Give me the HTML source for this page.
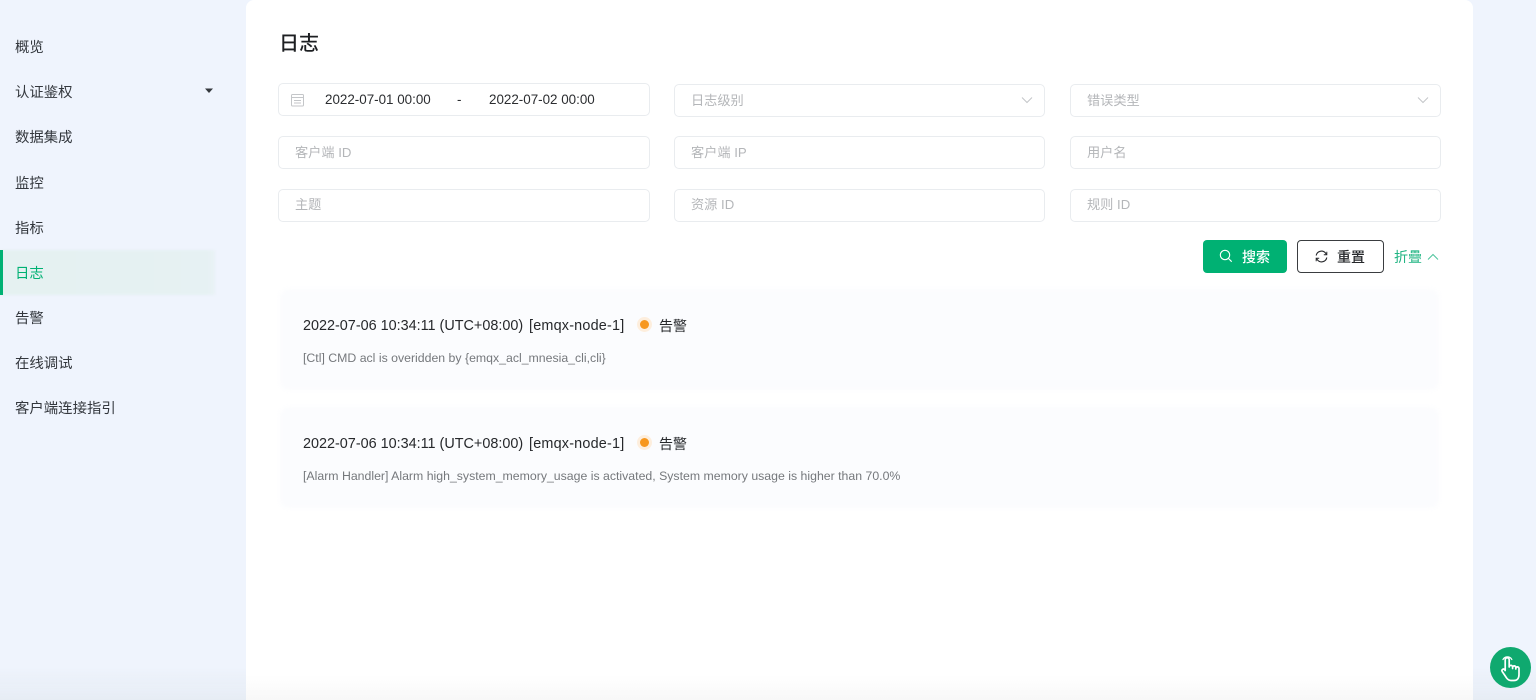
<!DOCTYPE html>
<html lang="zh">
<head>
<meta charset="utf-8">
<title>日志</title>
<style>
*{box-sizing:border-box;margin:0;padding:0}
html,body{width:1536px;height:700px;overflow:hidden}
body{background:#eff4fd;font-family:"Liberation Sans","Noto Sans CJK SC",sans-serif;color:#2e2e2e;position:relative}
#w{position:absolute;left:0;top:0;width:1536px;height:700px;filter:blur(.35px)}
.abs{position:absolute;white-space:nowrap}
.bottom{position:absolute;left:0;top:668px;width:1536px;height:32px;background:linear-gradient(#eff4fd00,#e6ecf4)}
.main{position:absolute;left:246px;top:0;width:1227px;height:700px;background:#fff;border-radius:8px 8px 0 0}
.mainfade{position:absolute;left:246px;top:675px;width:1227px;height:25px;background:linear-gradient(#fff0,#f8f8f8)}
.nav{position:absolute;left:15px;font-size:14.4px;line-height:20px;color:#33373d;white-space:nowrap}
.active-bg{position:absolute;left:0;top:250px;width:215px;height:45px;background:linear-gradient(90deg,#e5f1f1,#e6f1f3 96%,#e9f2f6);filter:blur(1px)}
.active-bar{position:absolute;left:0;top:250px;width:3px;height:45px;background:#00b173}
.field{position:absolute;width:371px;height:33px;background:#fff;border:1px solid #e9ecef;border-radius:5px;font-size:13.2px;line-height:31px;padding-left:16px;color:#b4b6b9;white-space:nowrap}
.card{position:absolute;left:280px;width:1159px;height:101px;background:#fbfcfe;border-radius:8px;filter:blur(2px)}
.line{position:absolute;left:303px;font-size:14.4px;line-height:20px;color:#26282b;white-space:nowrap}
.msg{position:absolute;left:303px;font-size:12.3px;line-height:18px;color:#75787c;white-space:nowrap}
.dot{position:absolute;left:640px;width:9px;height:9px;border-radius:50%;background:#f7971e;box-shadow:0 0 0 3px #fdeedd}
</style>
</head>
<body>
<div id="w">
<div class="bottom"></div>
<div class="active-bg"></div>
<div class="active-bar"></div>
<div class="nav" style="top:38px">概览</div>
<div class="nav" style="top:83px">认证鉴权</div>
<svg class="abs" style="left:205px;top:88px" width="8" height="6"><path d="M0 .5H8L4 5Z" fill="#34383d"/></svg>
<div class="nav" style="top:128px">数据集成</div>
<div class="nav" style="top:174px">监控</div>
<div class="nav" style="top:219px">指标</div>
<div class="nav" style="top:264px;color:#00b173">日志</div>
<div class="nav" style="top:309px">告警</div>
<div class="nav" style="top:354px">在线调试</div>
<div class="nav" style="top:399px">客户端连接指引</div>

<div class="main"></div>
<div class="mainfade"></div>
<div class="abs" style="left:279px;top:30px;font-size:20px;line-height:28px;font-weight:500;color:#1d1f22">日志</div>

<div class="field" style="left:278px;top:83px;width:372px"></div>
<svg class="abs" style="left:291px;top:93px" width="13" height="14" fill="none" stroke="#c4c6c9" stroke-width="1"><rect x=".5" y="1.5" width="12" height="11.5" rx="1"/><path d="M1 4.5H12M3 7.5H10M3 10H10"/></svg>
<div class="abs" style="left:325px;top:89.5px;font-size:13.4px;line-height:20px;color:#2b2d30">2022-07-01 00:00</div>
<div class="abs" style="left:457px;top:89.5px;font-size:13.4px;line-height:20px;color:#2b2d30">-</div>
<div class="abs" style="left:489px;top:89.5px;font-size:13.4px;line-height:20px;color:#2b2d30">2022-07-02 00:00</div>

<div class="field" style="left:674px;top:84px">日志级别</div>
<svg class="abs" style="left:1021px;top:96px" width="12" height="8" fill="none" stroke="#c3c5c8"><path d="M1 1.5L6 6.5L11 1.5"/></svg>
<div class="field" style="left:1070px;top:84px">错误类型</div>
<svg class="abs" style="left:1417px;top:96px" width="12" height="8" fill="none" stroke="#c3c5c8"><path d="M1 1.5L6 6.5L11 1.5"/></svg>

<div class="field" style="left:278px;top:136px;width:372px">客户端 ID</div>
<div class="field" style="left:674px;top:136px">客户端 IP</div>
<div class="field" style="left:1070px;top:136px">用户名</div>
<div class="field" style="left:278px;top:189px;width:372px;line-height:30px">主题</div>
<div class="field" style="left:674px;top:189px;line-height:30px">资源 ID</div>
<div class="field" style="left:1070px;top:189px;line-height:30px">规则 ID</div>

<div class="abs" style="left:1203px;top:240px;width:84px;height:33px;background:#00b173;border-radius:4px"></div>
<svg class="abs" style="left:1219px;top:249px" width="14" height="14" fill="none" stroke="#fff" stroke-width="1.1"><circle cx="6" cy="6" r="4.7"/><path d="M9.5 9.5L12.7 12.7"/></svg>
<div class="abs" style="left:1242px;top:247px;font-size:14px;line-height:20px;color:#fff;font-weight:500">搜索</div>
<div class="abs" style="left:1297px;top:240px;width:87px;height:33px;background:#fff;border:1px solid #3a3d40;border-radius:4px"></div>
<svg class="abs" style="left:1315px;top:250px" width="13" height="13" viewBox="0 0 13 13" fill="none" stroke="#25272a" stroke-width="1.1"><path d="M1.2 5.5A5.3 5.3 0 0 1 10.6 3.2L11.5 4.6M11.8 7.5A5.3 5.3 0 0 1 2.4 9.8L1.5 8.4"/><path d="M11.8 1.8V4.8H8.8M1.2 11.2V8.2H4.2" stroke-width="1"/></svg>
<div class="abs" style="left:1337px;top:247px;font-size:14px;line-height:20px;color:#26282b;font-weight:500">重置</div>
<div class="abs" style="left:1394px;top:247px;font-size:14px;line-height:20px;color:#1fb482;font-family:'Liberation Sans','Noto Sans CJK TC',sans-serif">折疊</div>
<svg class="abs" style="left:1427px;top:253px" width="12" height="8" fill="none" stroke="#4cc39c"><path d="M1 6.5L6 1.5L11 6.5"/></svg>

<div class="card" style="top:289px"></div>
<div class="line" style="top:316px">2022-07-06 10:34:11 (UTC+08:00)</div>
<div class="line" style="top:316px;left:529px;letter-spacing:.2px">[emqx-node-1]</div>
<div class="dot" style="top:320px"></div>
<div class="line" style="top:316px;left:659px;font-size:14px">告警</div>
<div class="msg" style="top:349px">[Ctl] CMD acl is overidden by {emqx_acl_mnesia_cli,cli}</div>

<div class="card" style="top:407px"></div>
<div class="line" style="top:434px">2022-07-06 10:34:11 (UTC+08:00)</div>
<div class="line" style="top:434px;left:529px;letter-spacing:.2px">[emqx-node-1]</div>
<div class="dot" style="top:438px"></div>
<div class="line" style="top:434px;left:659px;font-size:14px">告警</div>
<div class="msg" style="top:467px">[Alarm Handler] Alarm high_system_memory_usage is activated, System memory usage is higher than 70.0%</div>

<div class="abs" style="left:1490px;top:647px;width:41px;height:41px;border-radius:50%;background:#0fa96f"></div>
<svg class="abs" style="left:1490px;top:647px" width="41" height="41" viewBox="0 0 41 41" fill="none" stroke="#fff" stroke-width="1.7" stroke-linejoin="round" stroke-linecap="round">
<path d="M13 12.5A5 5 0 0 1 21.8 12.5" stroke-width="1.3"/>
<path d="M15.2 23V12.8A2 2 0 0 1 19.2 12.8V20M19.2 20A1.7 1.7 0 0 1 22.6 20V21.5M22.6 20.5A1.6 1.6 0 0 1 25.8 20.5V22M25.8 21.5A1.6 1.6 0 0 1 29 21.5V27.5C29 31 27.4 33.5 24 33.5H21C19 33.5 17.8 32.6 16.6 31L12.2 24.5C11.2 22.8 13.4 21.3 14.6 22.6L15.2 23.5"/>
</svg>
</div>
</body>
</html>
